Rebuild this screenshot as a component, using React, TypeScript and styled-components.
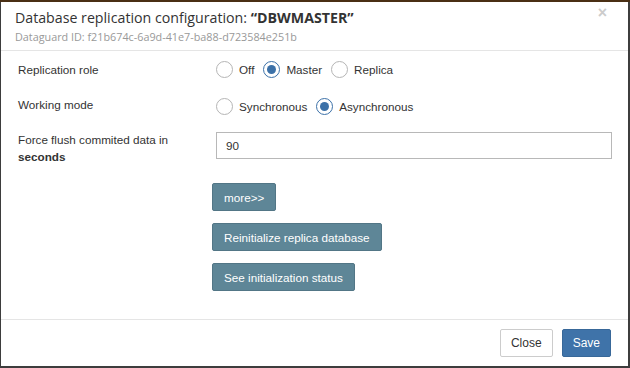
import React from "react";
import styled, { createGlobalStyle } from "styled-components";

const Global = createGlobalStyle`
  html, body { margin: 0; padding: 0; }
  body {
    width: 630px;
    height: 368px;
    background: #3d3d3d;
    overflow: hidden;
    font-family: "Liberation Sans", Arial, sans-serif;
  }
`;

const Backdrop = styled.div`
  width: 630px;
  height: 368px;
  box-sizing: border-box;
  border-top: 2px solid #4a2f14;
  padding: 0 2px 2px 1px;
  display: flex;
`;

const Modal = styled.div`
  flex: 1;
  background: #fff;
  display: flex;
  flex-direction: column;
`;

const Header = styled.div`
  position: relative;
  padding: 5px 15px 6px 14px;
  border-bottom: 1px solid #e5e5e5;
`;

const Title = styled.div`
  font-family: "Open Sans", sans-serif;
  font-size: 14.2px;
  color: #333;
  line-height: 22px;
  b { font-weight: 700; }
`;

const Sub = styled.div`
  font-family: "Open Sans", sans-serif;
  font-size: 10.8px;
  color: #999;
  line-height: 15px;
`;

const CloseX = styled.span`
  position: absolute;
  right: 21px;
  top: 2px;
  font-family: "Liberation Sans", Arial, sans-serif;
  font-size: 16px;
  font-weight: 700;
  color: #ccc;
`;

const Body = styled.div`
  flex: 1;
  padding: 8px 16px 0 17px;
  display: flex;
  flex-direction: column;
`;

const Row = styled.div<{ $h: number }>`
  display: grid;
  grid-template-columns: 198px 1fr;
  align-items: start;
  min-height: ${(p) => p.$h}px;
`;

const Label = styled.div<{ $pt?: number }>`
  font-size: 11.7px;
  color: #333;
  line-height: 17px;
  padding-top: ${(p) => p.$pt ?? 0}px;
  b { font-weight: 700; }
`;

const Radios = styled.div<{ $pt?: number }>`
  display: flex;
  align-items: center;
  gap: 9px;
  padding-top: ${(p) => p.$pt ?? 2}px;
`;

const RadioItem = styled.label`
  display: flex;
  align-items: center;
  gap: 6px;
  font-size: 11.7px;
  color: #333;
`;

const Circle = styled.span<{ $on?: boolean }>`
  width: 15px;
  height: 15px;
  border-radius: 50%;
  border: 1px solid ${(p) => (p.$on ? "#3c71a8" : "#b5b5b5")};
  display: flex;
  align-items: center;
  justify-content: center;
  background: #fff;
  &::after {
    content: "";
    width: 9px;
    height: 9px;
    border-radius: 50%;
    background: ${(p) => (p.$on ? "#3c71a8" : "transparent")};
  }
`;

const Input = styled.div`
  height: 25px;
  border: 1px solid #b8b8b8;
  padding: 0 9px;
  display: flex;
  align-items: center;
  font-size: 11.7px;
  color: #333;
  margin-top: 1px;
`;

const Buttons = styled.div`
  display: flex;
  flex-direction: column;
  align-items: flex-start;
  gap: 12px;
  padding: 18px 0 0 194px;
`;

const ActionBtn = styled.div`
  background: #5e8697;
  border: 1px solid #527686;
  border-radius: 2px;
  color: #fff;
  font-size: 11.7px;
  height: 28px;
  padding: 0 11px;
  display: flex;
  align-items: center;
  box-sizing: border-box;
`;

const Footer = styled.div`
  border-top: 1px solid #e5e5e5;
  padding: 9px 17px 9px 0;
  display: flex;
  justify-content: flex-end;
  gap: 9px;
`;

const FootBtn = styled.div<{ $primary?: boolean }>`
  height: 28px;
  box-sizing: border-box;
  padding: 0 10px;
  border-radius: 2px;
  display: flex;
  align-items: center;
  font-size: 12px;
  background: ${(p) => (p.$primary ? "#3f73a9" : "#fff")};
  color: ${(p) => (p.$primary ? "#fff" : "#333")};
  border: 1px solid ${(p) => (p.$primary ? "#386899" : "#ccc")};
`;

const Radio = ({ label, on }: { label: string; on?: boolean }) => (
  <RadioItem>
    <Circle $on={on} />
    {label}
  </RadioItem>
);

export default function App() {
  return (
    <>
      <Global />
      <Backdrop>
        <Modal>
          <Header>
            <Title>
              Database replication configuration: <b>“DBWMASTER”</b>
            </Title>
            <Sub>Dataguard ID: f21b674c-6a9d-41e7-ba88-d723584e251b</Sub>
            <CloseX>×</CloseX>
          </Header>
          <Body>
            <Row $h={35}>
              <Label $pt={2}>Replication role</Label>
              <Radios>
                <Radio label="Off" />
                <Radio label="Master" on />
                <Radio label="Replica" />
              </Radios>
            </Row>
            <Row $h={37}>
              <Label $pt={2}>Working mode</Label>
              <Radios $pt={4}>
                <Radio label="Synchronous" />
                <Radio label="Asynchronous" on />
              </Radios>
            </Row>
            <Row $h={34}>
              <Label>
                Force flush commited data in
                <br />
                <b>seconds</b>
              </Label>
              <Input>90</Input>
            </Row>
            <Buttons>
              <ActionBtn>more&gt;&gt;</ActionBtn>
              <ActionBtn>Reinitialize replica database</ActionBtn>
              <ActionBtn>See initialization status</ActionBtn>
            </Buttons>
          </Body>
          <Footer>
            <FootBtn>Close</FootBtn>
            <FootBtn $primary>Save</FootBtn>
          </Footer>
        </Modal>
      </Backdrop>
    </>
  );
}
